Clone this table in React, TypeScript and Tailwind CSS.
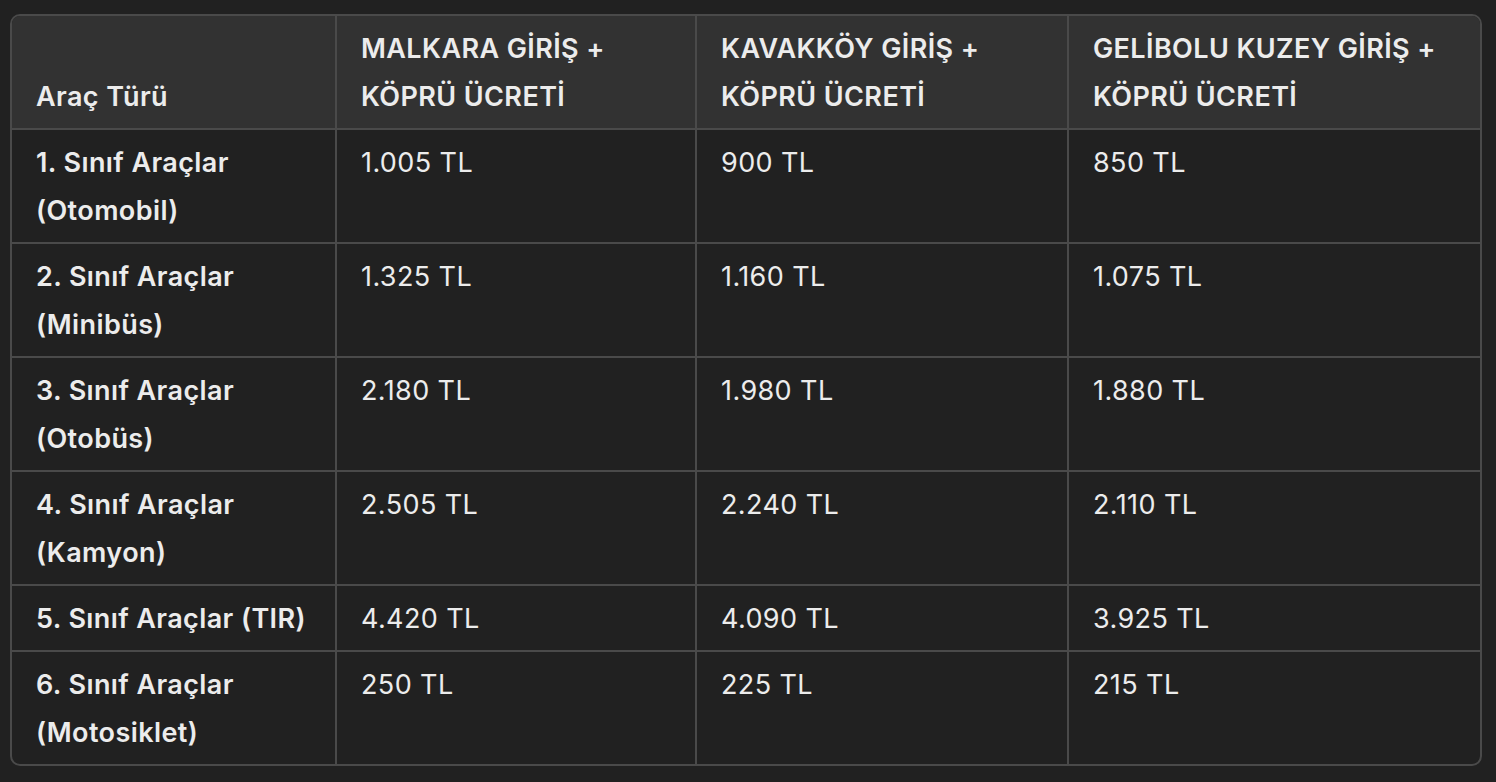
import React from 'react';

const rows: { name: string; malkara: string; kavakkoy: string; gelibolu: string }[] = [
  { name: '1. Sınıf Araçlar (Otomobil)', malkara: '1.005 TL', kavakkoy: '900 TL', gelibolu: '850 TL' },
  { name: '2. Sınıf Araçlar (Minibüs)', malkara: '1.325 TL', kavakkoy: '1.160 TL', gelibolu: '1.075 TL' },
  { name: '3. Sınıf Araçlar (Otobüs)', malkara: '2.180 TL', kavakkoy: '1.980 TL', gelibolu: '1.880 TL' },
  { name: '4. Sınıf Araçlar (Kamyon)', malkara: '2.505 TL', kavakkoy: '2.240 TL', gelibolu: '2.110 TL' },
  { name: '5. Sınıf Araçlar (TIR)', malkara: '4.420 TL', kavakkoy: '4.090 TL', gelibolu: '3.925 TL' },
  { name: '6. Sınıf Araçlar (Motosiklet)', malkara: '250 TL', kavakkoy: '225 TL', gelibolu: '215 TL' },
];

const headers = ['MALKARA GİRİŞ + KÖPRÜ ÜCRETİ', 'KAVAKKÖY GİRİŞ + KÖPRÜ ÜCRETİ', 'GELİBOLU KUZEY GİRİŞ + KÖPRÜ ÜCRETİ'];

export default function App() {
  return (
    <div className="min-h-screen w-full bg-[#212121] pl-[10px] pt-[14px] font-['Inter','Noto_Sans',sans-serif] text-[27px] leading-[48px] tracking-[0.4px] text-[#ececec]">
      <div className="w-[1472px] overflow-hidden rounded-[10px] border-2 border-[#4a4a4a]">
        <table className="w-full table-fixed border-collapse">
          <colgroup>
            <col className="w-[324px]" />
            <col className="w-[360px]" />
            <col className="w-[372px]" />
            <col />
          </colgroup>
          <thead>
            <tr className="bg-[#323232]">
              <th className="border-b-2 border-r-2 border-[#4a4a4a] pl-[24px] pr-[20px] pt-[9px] pb-[7px] text-left align-bottom font-semibold">
                Araç Türü
              </th>
              {headers.map((h, i) => (
                <th
                  key={h}
                  className={`border-b-2 border-[#4a4a4a] pl-[24px] pr-[20px] pt-[9px] pb-[7px] text-left align-bottom font-semibold ${i < 2 ? 'border-r-2' : ''}`}
                >
                  {h}
                </th>
              ))}
            </tr>
          </thead>
          <tbody>
            {rows.map((r, idx) => {
              const last = idx === rows.length - 1;
              return (
                <tr key={r.name}>
                  <td className={`border-r-2 border-[#4a4a4a] pl-[24px] pr-[20px] pt-[9px] pb-[7px] align-top font-semibold ${last ? '' : 'border-b-2'}`}>
                    {r.name}
                  </td>
                  <td className={`border-r-2 border-[#4a4a4a] pl-[24px] pr-[20px] pt-[9px] pb-[7px] align-top ${last ? '' : 'border-b-2'}`}>
                    {r.malkara}
                  </td>
                  <td className={`border-r-2 border-[#4a4a4a] pl-[24px] pr-[20px] pt-[9px] pb-[7px] align-top ${last ? '' : 'border-b-2'}`}>
                    {r.kavakkoy}
                  </td>
                  <td className={`border-[#4a4a4a] pl-[24px] pr-[20px] pt-[9px] pb-[7px] align-top ${last ? '' : 'border-b-2'}`}>
                    {r.gelibolu}
                  </td>
                </tr>
              );
            })}
          </tbody>
        </table>
      </div>
    </div>
  );
}
